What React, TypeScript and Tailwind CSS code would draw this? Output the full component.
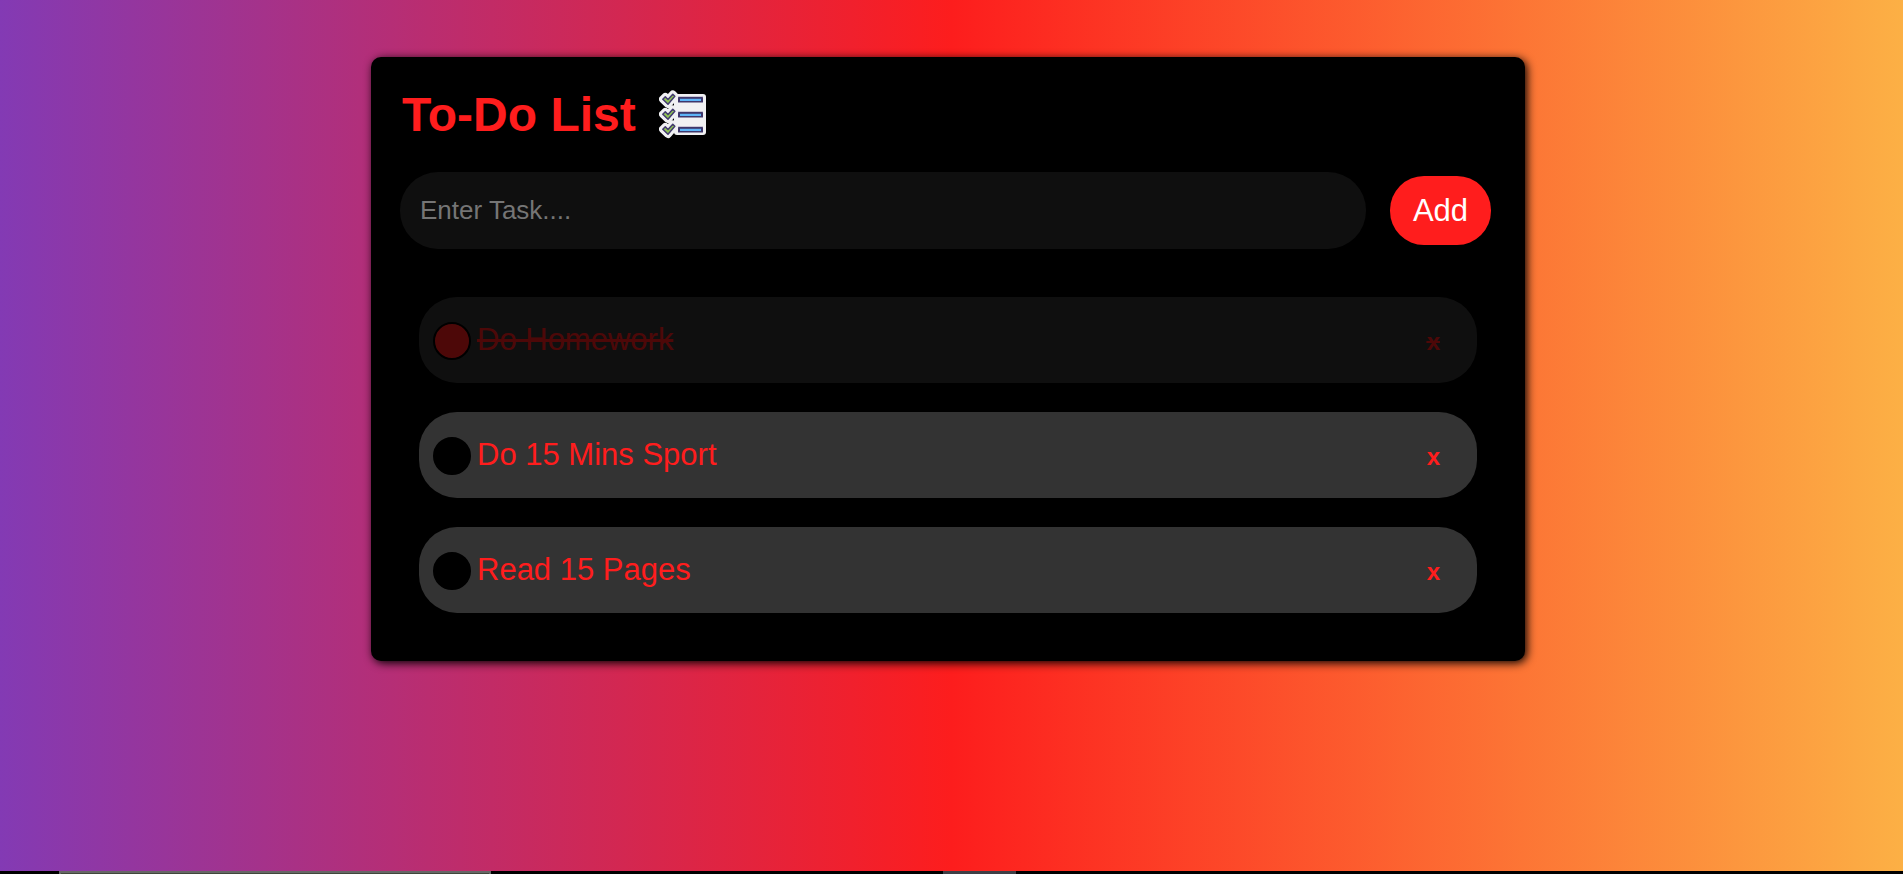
import { useState, type FormEvent } from "react";

type Task = { id: number; text: string; done: boolean };

const initialTasks: Task[] = [
  { id: 1, text: "Do Homework", done: true },
  { id: 2, text: "Do 15 Mins Sport", done: false },
  { id: 3, text: "Read 15 Pages", done: false },
];

const iconRows = [0, 15, 30];
const tick = "M3.8 9.2 L6.3 6.8 L9 9.5 L13.8 4.2 L15.8 6.3 L9 14.2 Z";

function ChecklistIcon() {
  return (
    <svg viewBox="0 0 48 49" className="mb-0.5 h-[49px] w-12 shrink-0" aria-hidden="true">
      <rect x="15" y="4" width="32" height="41" rx="3" fill="#f1f1f3" />
      {iconRows.map((y) => (
        <path
          key={`halo-${y}`}
          d={tick}
          transform={`translate(0 ${y})`}
          fill="#f1f1f3"
          stroke="#f1f1f3"
          strokeWidth="7.6"
          strokeLinejoin="round"
        />
      ))}
      {iconRows.map((y) => (
        <g key={`row-${y}`} transform={`translate(0 ${y})`}>
          <path d={tick} fill="#8ec255" stroke="#433a6e" strokeWidth="1.5" strokeLinejoin="round" />
          <rect x="19" y="6" width="25" height="1" fill="#c9c6d6" />
          <rect x="19" y="7" width="25" height="5.6" rx="0.6" fill="#3f376b" />
          <rect x="21" y="8.8" width="21" height="2.2" fill="#5db4f7" />
        </g>
      ))}
    </svg>
  );
}

export default function App() {
  const [tasks, setTasks] = useState<Task[]>(initialTasks);
  const [draft, setDraft] = useState("");

  const addTask = (event: FormEvent) => {
    event.preventDefault();
    const text = draft.trim();
    if (!text) return;
    setTasks([...tasks, { id: Date.now(), text, done: false }]);
    setDraft("");
  };

  const toggleTask = (id: number) =>
    setTasks(tasks.map((t) => (t.id === id ? { ...t, done: !t.done } : t)));

  const removeTask = (id: number) => setTasks(tasks.filter((t) => t.id !== id));

  return (
    <div className="flex min-h-screen flex-col font-['Liberation_Sans',Arial,sans-serif]">
      <main className="flex-1 bg-[linear-gradient(90deg,#833ab4_0%,#fd1d1d_50%,#fcb045_100%)] pt-[57px] pr-[7px]">
        <section className="mx-auto w-full max-w-[1154px] rounded-[10px] bg-black px-7 pt-[30px] pb-12 shadow-[2px_2px_10px_#000]">
          <div className="flex items-center gap-[23px] pl-[3px]">
            <h1 className="text-[48px] leading-[56px] font-bold text-[#ff1d1d]">To-Do List</h1>
            <ChecklistIcon />
          </div>

          <form onSubmit={addTask} className="mt-[29px] flex items-center gap-6 pr-1.5 pl-px">
            <input
              type="text"
              aria-label="New task"
              placeholder="Enter Task...."
              value={draft}
              onChange={(e) => setDraft(e.target.value)}
              className="h-[77px] min-w-0 flex-1 rounded-[38px] bg-[#0f0f0f] px-5 text-[26px] text-[#ff1d1d] outline-none placeholder:text-[#757575]"
            />
            <button
              type="submit"
              className="h-[69px] w-[101px] rounded-[34px] bg-[#ff1d1d] pt-0.5 text-[31px] text-white"
            >
              Add
            </button>
          </form>

          <ul className="mt-12 flex flex-col gap-[29px] px-5">
            {tasks.map((task) => (
              <li
                key={task.id}
                className={`flex h-[86px] items-center rounded-[38px] bg-[#333] pr-[37px] pl-[14px] text-[#ff1d1d] ${
                  task.done ? "line-through opacity-30" : ""
                }`}
              >
                <label className="flex min-w-0 flex-1 items-center gap-1.5 text-[31px] leading-9">
                  <input
                    type="checkbox"
                    checked={task.done}
                    onChange={() => toggleTask(task.id)}
                    className="mt-0.5 size-[38px] shrink-0 appearance-none rounded-full border-2 border-black bg-black checked:bg-[#ff1d1d]"
                  />
                  <span>{task.text}</span>
                </label>
                <button
                  type="button"
                  aria-label={`x, remove ${task.text}`}
                  onClick={() => removeTask(task.id)}
                  className={`pt-1 text-[24px] leading-8 font-bold ${task.done ? "line-through" : ""}`}
                >
                  x
                </button>
              </li>
            ))}
          </ul>
        </section>
      </main>

      <footer className="flex h-[3px] bg-black" aria-hidden="true">
        <div className="ml-[59px] w-[432px] border-2 border-b-0 border-[#666] bg-[#40463a]" />
        <div className="ml-[452px] w-[73px] bg-[#3f3f46]" />
      </footer>
    </div>
  );
}
